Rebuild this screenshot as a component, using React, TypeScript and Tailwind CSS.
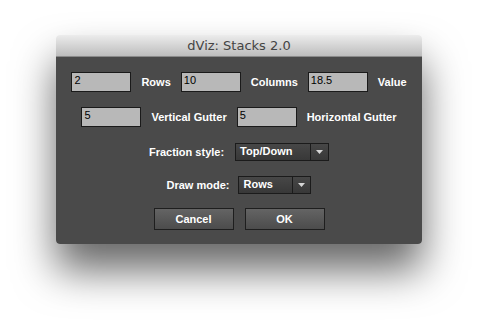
const labelFont = { fontFamily: '"Liberation Sans", Arial, sans-serif' }
const titleFont = { fontFamily: '"DejaVu Sans", "Liberation Sans", sans-serif' }

type Field = { value: string; label: string }

const rowOne: Field[] = [
  { value: '2', label: 'Rows' },
  { value: '10', label: 'Columns' },
  { value: '18.5', label: 'Value' },
]

const rowTwo: Field[] = [
  { value: '5', label: 'Vertical Gutter' },
  { value: '5', label: 'Horizontal Gutter' },
]

function Input({ value }: { value: string }) {
  return (
    <div className="w-[60px] h-[20px] bg-[#b8b8b8] border border-[#1a1a1a] pl-[2px] font-normal text-[11px] leading-[15px] text-black">
      {value}
    </div>
  )
}

function Select({ value, width }: { value: string; width: string }) {
  return (
    <div className={`${width} h-[18px] flex border border-[#1b1b1b] bg-gradient-to-b from-[#474747] to-[#383838] text-white font-bold text-[11px]`}>
      <div className="flex-1 pl-[4px] leading-[15px]">{value}</div>
      <div className="w-[18px] border-l border-[#1b1b1b] flex items-center justify-center">
        <svg width="7" height="4" viewBox="0 0 7 4">
          <path d="M0 0h7L3.5 4z" fill="#d6d6d6" />
        </svg>
      </div>
    </div>
  )
}

function Button({ label }: { label: string }) {
  return (
    <button className="w-[80px] h-[22px] border border-[#1e1e1e] bg-gradient-to-b from-[#646464] to-[#4c4c4c] text-white font-bold text-[11px] leading-[18px]">
      {label}
    </button>
  )
}

export default function App() {
  return (
    <div className="w-[478px] h-[325px] bg-white pt-[35px] pl-[56px]" style={labelFont}>
      <div className="w-[366px] rounded-[4px] overflow-hidden shadow-[0_26px_42px_rgba(0,0,0,0.6)]">
        <div
          className="h-[22px] bg-gradient-to-b from-[#ececec] to-[#bdbdbd] border-b border-[#8a8a8a] text-center text-[13px] leading-[21px] text-[#444]"
          style={titleFont}
        >
          dViz: Stacks 2.0
        </div>
        <div className="bg-[#4a4a4a] flex flex-col items-center pt-[15px] pb-[14px] text-white font-bold text-[11px]">
          <div className="flex items-center gap-[10px]">
            {rowOne.map((f, i) => (
              <div key={i} className="flex items-center gap-[10px]">
                <Input value={f.value} />
                <span>{f.label}</span>
              </div>
            ))}
          </div>
          <div className="flex items-center gap-[10px] mt-[15px]">
            {rowTwo.map((f, i) => (
              <div key={i} className="flex items-center gap-[10px]">
                <Input value={f.value} />
                <span>{f.label}</span>
              </div>
            ))}
          </div>
          <div className="flex items-center gap-[11px] mt-[16px]">
            <span>Fraction style:</span>
            <Select value="Top/Down" width="w-[94px]" />
          </div>
          <div className="flex items-center gap-[9px] mt-[15px]">
            <span>Draw mode:</span>
            <Select value="Rows" width="w-[73px]" />
          </div>
          <div className="flex items-center gap-[11px] mt-[14px]">
            <Button label="Cancel" />
            <Button label="OK" />
          </div>
        </div>
      </div>
    </div>
  )
}
